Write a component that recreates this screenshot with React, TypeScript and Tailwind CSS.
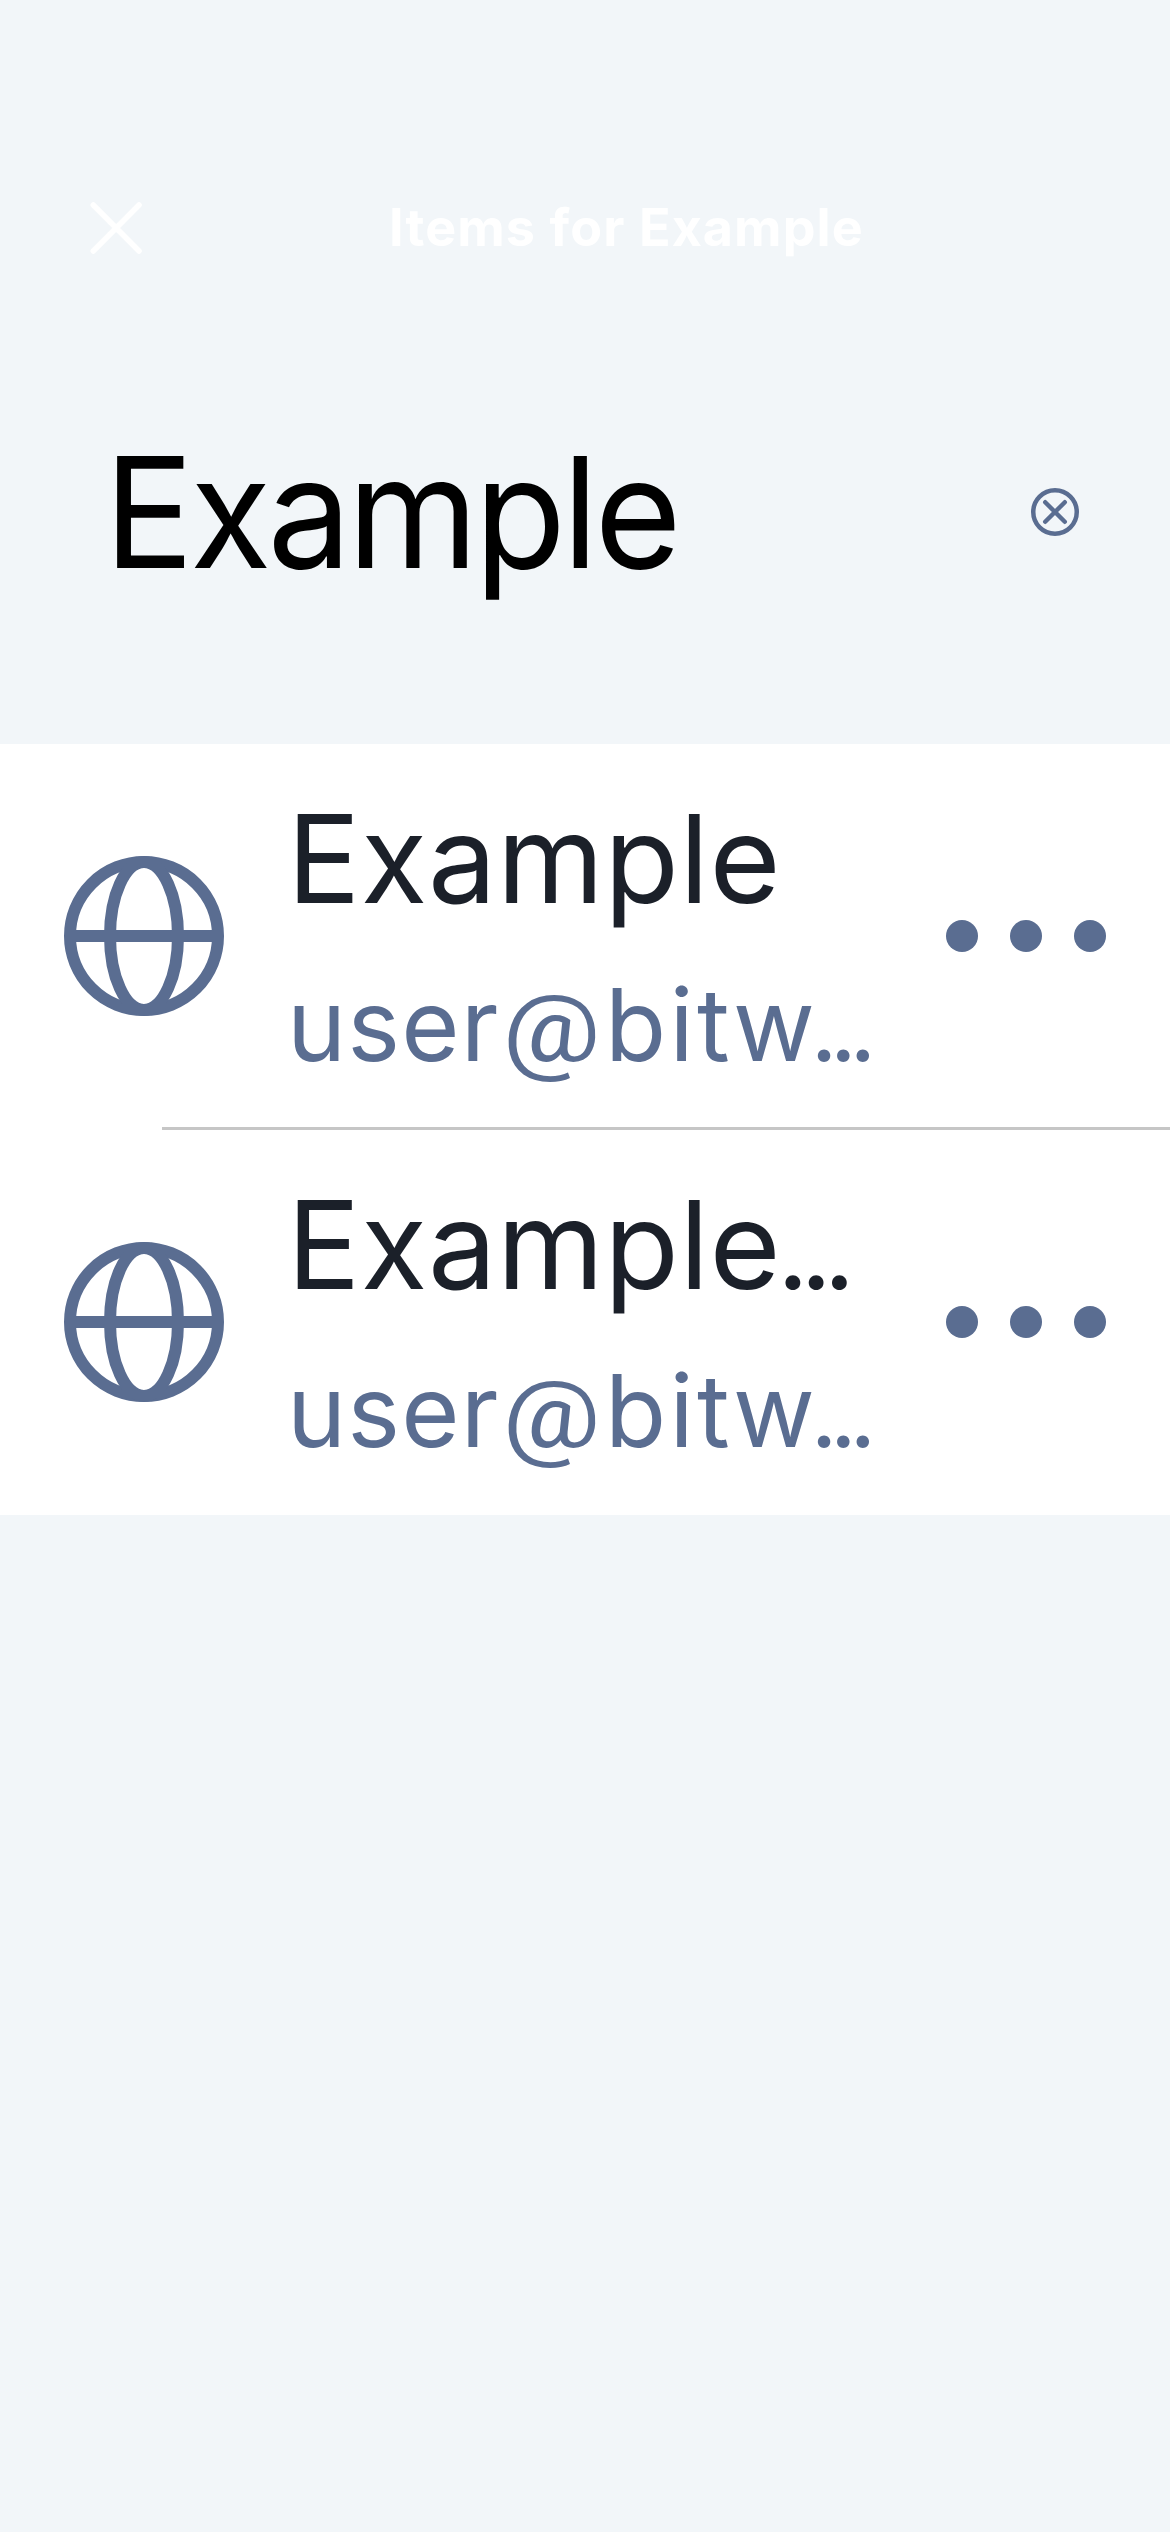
function CloseIcon() {
  return (
    <svg viewBox="0 0 54 54" className="h-[54px] w-[54px] shrink-0" fill="none" stroke="currentColor" strokeWidth="5.600" strokeLinecap="round">
      <path d="M4.300 4 50 50M50 4 4.300 50" />
    </svg>
  );
}

function ClearIcon() {
  return (
    <svg viewBox="0 0 48 48" className="h-12 w-12 shrink-0" fill="none" stroke="currentColor" strokeLinecap="round">
      <circle cx="24" cy="24" r="21.750" strokeWidth="4.500" />
      <path d="M14.200 14.200 33.800 33.800M33.800 14.200 14.200 33.800" strokeWidth="4.400" />
    </svg>
  );
}

function GlobeIcon() {
  return (
    <svg viewBox="0 0 160 160" className="h-40 w-40 shrink-0" fill="none" stroke="currentColor" strokeWidth="12">
      <circle cx="80" cy="80" r="74" />
      <ellipse cx="80" cy="80" rx="34" ry="74" />
      <path d="M6 80H154" />
    </svg>
  );
}

function MoreButton() {
  return (
    <button className="flex shrink-0 gap-8" aria-label="More options">
      <span className="h-8 w-8 rounded-full bg-current" />
      <span className="h-8 w-8 rounded-full bg-current" />
      <span className="h-8 w-8 rounded-full bg-current" />
    </button>
  );
}

function VaultItem({ truncated }: { truncated?: boolean }) {
  return (
    <div className="flex h-[384px] w-full items-center px-16 text-[#5a6d91]">
      <GlobeIcon />
      <div className="ml-[63px] h-full flex-1 whitespace-nowrap pt-[35px]">
        <div className="h-[160px] text-[122px] leading-[160px] tracking-[0.5px] text-[#1b2029]">
          Exampl<span className="tracking-[-4px]">e</span>
          {truncated && <span className="text-[112px] leading-none tracking-[-9px]">...</span>}
        </div>
        <div className="h-[172px] text-[100px] leading-[172px]">
          <span className="tracking-[1.200px]">user</span>
          <span className="ml-[9px] mr-[11px] inline-block scale-x-[1.150] font-['Roboto'] text-[95px] leading-none">@</span>
          <span className="tracking-[3.300px]">bit</span>
          <span className="tracking-[-4.500px]">w</span>
          <span className="text-[94px] leading-none tracking-[-7.700px]">...</span>
        </div>
      </div>
      <MoreButton />
    </div>
  );
}

export default function App() {
  return (
    <div className="flex h-[2532px] w-[1170px] flex-col overflow-hidden bg-[#f2f6f9] font-['Inter',sans-serif]">
      <header className="mt-[162px] flex h-[132px] items-center pl-[89px] text-white">
        <CloseIcon />
        <h1 className="ml-[246px] whitespace-nowrap text-[52px] font-bold leading-[64px] tracking-[1.120px]">Items for Example</h1>
      </header>
      <div className="flex h-[450px] items-center justify-between pb-[14px] pl-[104px] pr-[91px]">
        <div className="origin-left scale-x-[0.970] whitespace-nowrap text-[154px] leading-[190px] tracking-[-4px] text-black">Example</div>
        <button className="text-[#5a6d91]" aria-label="Clear">
          <ClearIcon />
        </button>
      </div>
      <main className="h-[771px] bg-white">
        <VaultItem />
        <div className="-mt-px ml-[162px] h-[3px] bg-[#c6c6c6]" />
        <VaultItem truncated />
      </main>
    </div>
  );
}
